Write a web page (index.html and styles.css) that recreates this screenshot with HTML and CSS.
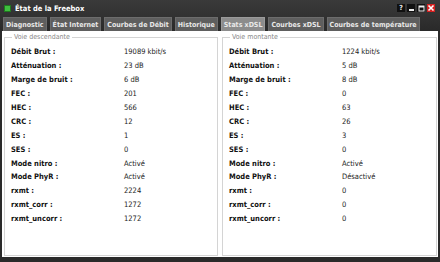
FILE: index.html
```html
<!DOCTYPE html>
<html lang="fr">
<head>
<meta charset="utf-8">
<title>État de la Freebox</title>
<link rel="stylesheet" href="styles.css">
</head>
<body>
<div class="window">
  <div class="titlebar">
    <span class="app-icon"></span>
    <span class="title">État de la Freebox</span>
    <div class="controls">
      <span class="ctl help">?</span>
      <span class="ctl min"><svg width="7" height="7" viewBox="0 0 7 7"><rect x="1" y="4" width="5" height="2" fill="#eee"/></svg></span>
      <span class="ctl max"><svg width="7" height="7" viewBox="0 0 7 7"><rect x="1" y="1" width="5" height="5" fill="none" stroke="#eee" stroke-width="1"/><rect x="1" y="1" width="5" height="1.5" fill="#eee"/></svg></span>
      <span class="ctl close"><svg width="8" height="8" viewBox="0 0 8 8"><path d="M1.5 1.5L6.5 6.5M6.5 1.5L1.5 6.5" stroke="#fff" stroke-width="1.6"/></svg></span>
    </div>
  </div>
  <div class="tabs">
    <span class="tab">Diagnostic</span>
    <span class="tab">État Internet</span>
    <span class="tab">Courbes de Débit</span>
    <span class="tab">Historique</span>
    <span class="tab active">Stats xDSL</span>
    <span class="tab">Courbes xDSL</span>
    <span class="tab">Courbes de température</span>
  </div>
  <div class="content">
    <fieldset class="panel">
      <legend>Voie descendante</legend>
      <div class="rows">
        <span class="k">Débit Brut :</span><span class="v">19089 kbit/s</span>
        <span class="k">Atténuation :</span><span class="v">23 dB</span>
        <span class="k">Marge de bruit :</span><span class="v">6 dB</span>
        <span class="k">FEC :</span><span class="v">201</span>
        <span class="k">HEC :</span><span class="v">566</span>
        <span class="k">CRC :</span><span class="v">12</span>
        <span class="k">ES :</span><span class="v">1</span>
        <span class="k">SES :</span><span class="v">0</span>
        <span class="k">Mode nitro :</span><span class="v">Activé</span>
        <span class="k">Mode PhyR :</span><span class="v">Activé</span>
        <span class="k">rxmt :</span><span class="v">2224</span>
        <span class="k">rxmt_corr :</span><span class="v">1272</span>
        <span class="k">rxmt_uncorr :</span><span class="v">1272</span>
      </div>
    </fieldset>
    <fieldset class="panel">
      <legend>Voie montante</legend>
      <div class="rows">
        <span class="k">Débit Brut :</span><span class="v">1224 kbit/s</span>
        <span class="k">Atténuation :</span><span class="v">5 dB</span>
        <span class="k">Marge de bruit :</span><span class="v">8 dB</span>
        <span class="k">FEC :</span><span class="v">0</span>
        <span class="k">HEC :</span><span class="v">63</span>
        <span class="k">CRC :</span><span class="v">26</span>
        <span class="k">ES :</span><span class="v">3</span>
        <span class="k">SES :</span><span class="v">0</span>
        <span class="k">Mode nitro :</span><span class="v">Activé</span>
        <span class="k">Mode PhyR :</span><span class="v">Désactivé</span>
        <span class="k">rxmt :</span><span class="v">0</span>
        <span class="k">rxmt_corr :</span><span class="v">0</span>
        <span class="k">rxmt_uncorr :</span><span class="v">0</span>
      </div>
    </fieldset>
  </div>
</div>
</body>
</html>
```
FILE: styles.css
```css
* { box-sizing: border-box; }
html, body { margin: 0; padding: 0; }
body {
  background: #2c2c2c;
  font-family: "DejaVu Sans Condensed", "DejaVu Sans", Verdana, sans-serif;
  font-stretch: condensed;
  width: 440px;
  height: 262px;
  overflow: hidden;
}
.window {
  width: 440px;
  height: 262px;
  background: linear-gradient(#3a3a3a, #2a2a2a 30px, #2a2a2a);
  padding: 0 2px;
  display: flex;
  flex-direction: column;
}
.titlebar {
  height: 16px;
  display: flex;
  align-items: center;
  padding: 0 2px;
}
.app-icon {
  width: 7px;
  height: 7px;
  background: #3fbf3f;
  border: 1px solid #1f7a1f;
  margin-right: 4px;
}
.title {
  color: #fff;
  font-weight: bold;
  font-size: 7.5px;
}
.controls {
  margin-left: auto;
  display: flex;
  gap: 2px;
  margin-right: 1px;
}
.ctl {
  width: 8px;
  height: 8px;
  background: #111;
  display: flex;
  align-items: center;
  justify-content: center;
  color: #eee;
  font-size: 7px;
  font-weight: bold;
  line-height: 8px;
}
.ctl.close { background: #d42020; }
.tabs {
  display: flex;
  gap: 3px;
  height: 15px;
  padding: 1px 0 0 1px;
}
.tab {
  background: #5e5e5e;
  border: 1px solid #6c6c6c;
  border-bottom: none;
  color: #e8e8e8;
  font-size: 7px;
  font-weight: bold;
  padding: 0 2px;
  display: flex;
  align-items: center;
  white-space: nowrap;
}
.tab.active {
  background: #8c8c8c;
  border-color: #9a9a9a;
}
.content {
  flex: 1;
  background: #fff;
  margin-bottom: 5px;
  display: grid;
  grid-template-columns: 214px 1fr;
  gap: 4px;
  padding: 2px 1px 1px 2px;
}
.panel {
  margin: 0;
  border: 1px solid #d4d4d4;
  padding: 4px 6px 0;
  min-width: 0;
}
legend {
  color: #888;
  font-size: 7px;
  padding: 0 2px;
  margin-left: 1px;
}
.rows {
  display: grid;
  grid-template-columns: 113px 1fr;
  grid-auto-rows: 13.9px;
  align-items: center;
  font-size: 7.5px;
}
.k {
  font-weight: bold;
  color: #111;
}
.v {
  color: #222;
}
```
